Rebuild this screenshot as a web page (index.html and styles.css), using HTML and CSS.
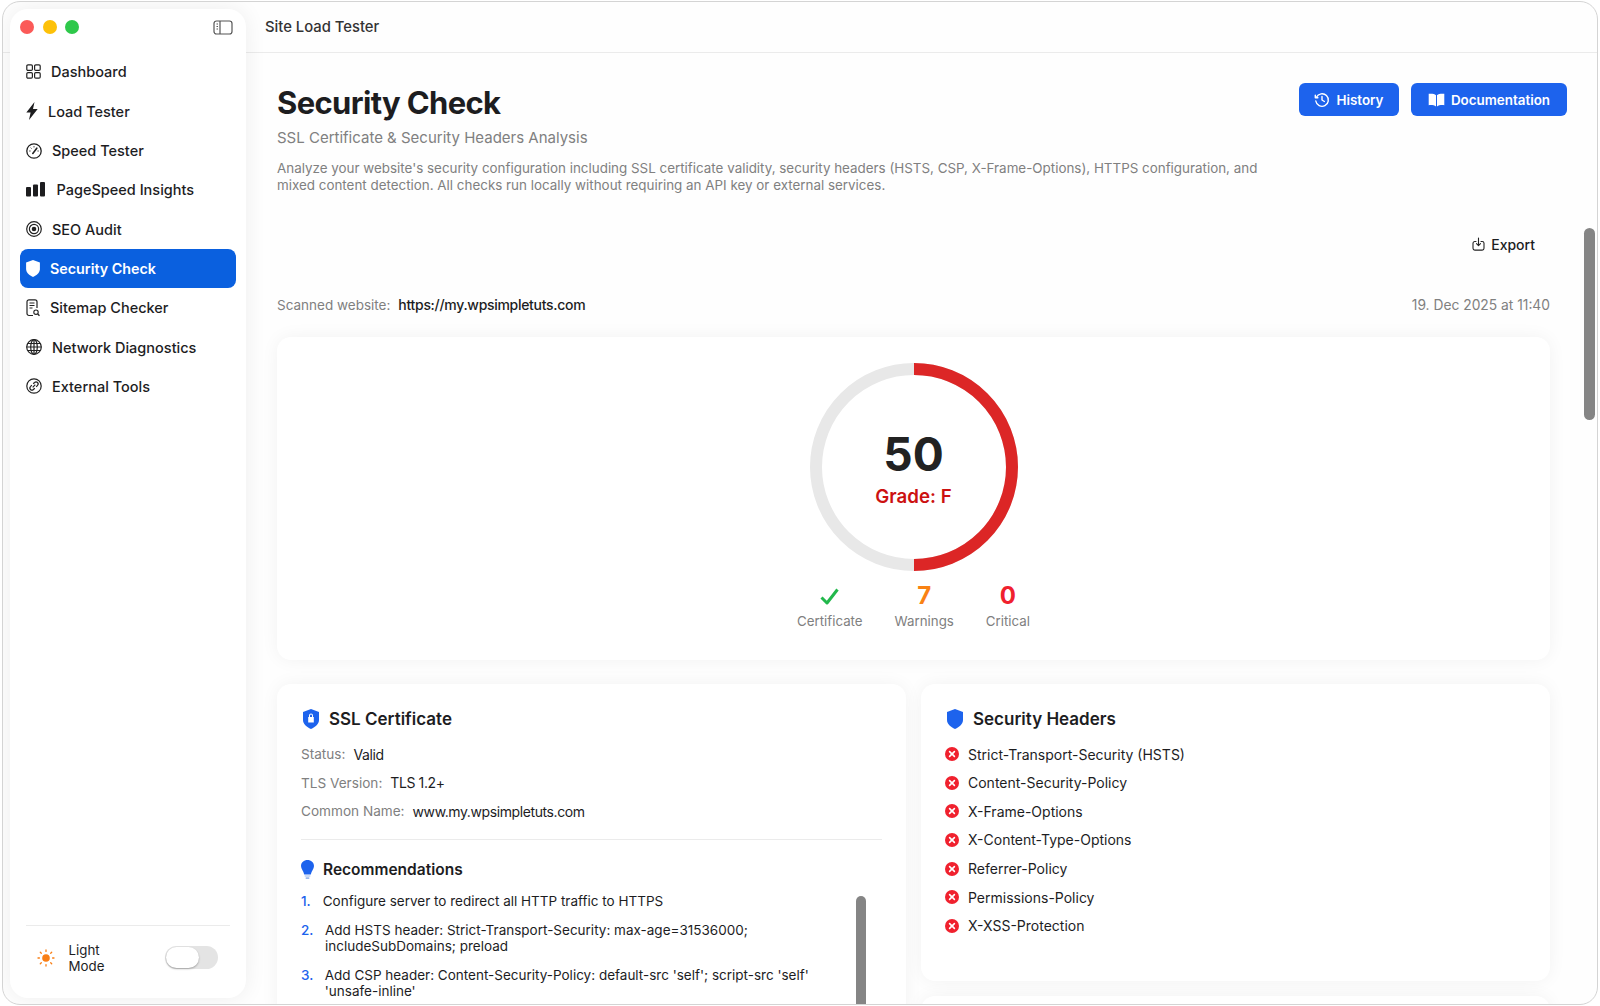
FILE: index.html
```html
<!DOCTYPE html>
<html lang="en">
<head>
<meta charset="utf-8">
<title>Site Load Tester</title>
<link rel="stylesheet" href="styles.css">
</head>
<body>
<div class="window">
  <aside class="sidebar">
    <div class="side-top">
      <div class="lights"><span class="light red"></span><span class="light yellow"></span><span class="light green"></span></div>
      <svg class="toggle-side" width="20" height="15" viewBox="0 0 20 15" fill="none" stroke="#555" stroke-width="1.2"><rect x="1" y="1" width="18" height="13" rx="2.5"/><path d="M7 1v13"/><path d="M3.5 4h1.5M3.5 6.5h1.5M3.5 9h1.5" stroke-width="1"/></svg>
    </div>
    <nav class="nav">
      <a class="nav-item"><svg width="15" height="15" viewBox="0 0 15 15" fill="none" stroke="#222" stroke-width="1.2"><rect x=".8" y=".8" width="5.6" height="5.6" rx="1.2"/><rect x="8.6" y=".8" width="5.6" height="5.6" rx="1.2"/><rect x=".8" y="8.6" width="5.6" height="5.6" rx="1.2"/><rect x="8.6" y="8.6" width="5.6" height="5.6" rx="1.2"/></svg>Dashboard</a>
      <a class="nav-item"><svg width="12" height="18" viewBox="0 0 12 18" fill="#1d1d1f"><path d="M8.500 0 .3 10.600h4.300L3 18l8.700-11H7z"/></svg>Load Tester</a>
      <a class="nav-item"><svg width="16" height="16" viewBox="0 0 16 16" fill="none" stroke="#222" stroke-width="1.300"><circle cx="8" cy="8" r="7.200"/><path d="M6.800 10.400 10.800 5.200" stroke-width="1.600" stroke-linecap="round"/><path d="M3.300 8h1.200M8 3.200v1.200M4.700 4.700l.8.800M11.500 8h1.200" stroke-width="1"/></svg>Speed Tester</a>
      <a class="nav-item"><svg class="bars" width="19" height="15" viewBox="0 0 19 15" fill="#1d1d1f"><rect x="0" y="5" width="5" height="9.500" rx="1"/><rect x="7" y="2.500" width="5" height="12" rx="1"/><rect x="14" y="0" width="5" height="14.500" rx="1"/></svg>PageSpeed Insights</a>
      <a class="nav-item"><svg width="16" height="16" viewBox="0 0 16 16" fill="none" stroke="#222" stroke-width="1.200"><circle cx="8" cy="8" r="7.300"/><circle cx="8" cy="8" r="4.600"/><circle cx="8" cy="8" r="2.300" fill="#222" stroke="none"/></svg>SEO Audit</a>
      <a class="nav-item active"><svg width="14" height="17" viewBox="0 0 13 16" fill="#fff"><path d="M6.500 0 13 2.300v6.200c0 3.500-3 6-6.500 7.500C3 14.500 0 12 0 8.500V2.300z"/></svg>Security Check</a>
      <a class="nav-item"><svg width="14" height="18" viewBox="0 0 14 18" fill="none" stroke="#222" stroke-width="1.200"><path d="M7 16.500H3a2 2 0 0 1-2-2V2.800a2 2 0 0 1 2-2h6a2 2 0 0 1 2 2V9"/><path d="M3.500 4h5M3.500 6.500h5M3.500 9h3"/><circle cx="10" cy="13.200" r="2.200" stroke-width="1.100"/><path d="m11.700 15 1.800 1.800" stroke-width="1.300"/></svg>Sitemap Checker</a>
      <a class="nav-item"><svg width="16" height="16" viewBox="0 0 16 16" fill="none" stroke="#222" stroke-width="1.200"><circle cx="8" cy="8" r="7.300"/><ellipse cx="8" cy="8" rx="3.300" ry="7.300"/><path d="M8 .700v14.600M.700 8h14.600M1.700 4.500h12.600M1.700 11.500h12.600"/></svg>Network Diagnostics</a>
      <a class="nav-item"><svg width="16" height="16" viewBox="0 0 16 16" fill="none" stroke="#222" stroke-width="1.200"><circle cx="8" cy="8" r="7.200"/><path d="m6.700 9.300 2.600-2.600"/><path d="M7.200 5.800 8.600 4.500a2 2 0 0 1 2.900 2.900l-1.300 1.400M8.800 10.200l-1.400 1.300a2 2 0 0 1-2.900-2.900l1.300-1.400"/></svg>External Tools</a>
    </nav>
    <div class="side-foot">
      <div class="theme">
        <svg class="sun" width="18" height="18" viewBox="0 0 18 18" fill="none" stroke="#f97f16" stroke-width="1.300" stroke-linecap="round"><circle cx="9" cy="9" r="3.800" fill="#f97f16" stroke="none"/><path d="M9 1v1.400M9 15.600V17M1 9h1.400M15.600 9H17M3.300 3.300l1 1M13.700 13.700l1 1M3.300 14.700l1-1M13.700 4.300l1-1"/></svg>
        <span class="theme-label">Light<br>Mode</span>
        <span class="switch"><span class="knob"></span></span>
      </div>
    </div>
  </aside>
  <main class="main">
    <header class="topbar">Site Load Tester</header>
    <div class="content">
      <section class="page-head">
        <div class="page-intro">
          <h1>Security Check</h1>
          <p class="subtitle">SSL Certificate &amp; Security Headers Analysis</p>
          <p class="desc">Analyze your website's security configuration including SSL certificate validity, security headers (HSTS, CSP, X-Frame-Options), HTTPS configuration, and mixed content detection. All checks run locally without requiring an API key or external services.</p>
        </div>
        <div class="actions">
          <a class="btn btn-history"><svg width="16" height="16" viewBox="0 0 16 16" fill="none" stroke="#fff" stroke-width="1.400" stroke-linecap="round" stroke-linejoin="round"><path d="M2.400 5.200A6.300 6.300 0 1 1 1.800 9"/><path d="M1.300 3.200v2.600h2.600"/><path d="M8 4.500V8l2.400 1.500"/></svg>History</a>
          <a class="btn btn-docs"><svg width="17" height="14" viewBox="0 0 17 14" fill="#fff"><path d="M8 2.200C6.500.900 4 .500.700.800v11.400c3-.3 5.500 0 7.300 1.300zM9 2.200c1.500-1.300 4-1.700 7.300-1.400v11.400c-3-.3-5.500 0-7.300 1.300z"/></svg>Documentation</a>
        </div>
      </section>
      <section class="results">
        <div class="export-row"><a class="export"><svg width="13" height="14" viewBox="0 0 13 14" fill="none" stroke="#222" stroke-width="1.100" stroke-linecap="round" stroke-linejoin="round"><path d="M4 4.500H2.800a1.800 1.800 0 0 0-1.800 1.800v5a1.800 1.800 0 0 0 1.800 1.800h7.400a1.800 1.800 0 0 0 1.800-1.800v-5a1.800 1.800 0 0 0-1.800-1.800H9"/><path d="M6.500 1v7.500M4.500 6.700l2 2 2-2"/></svg>Export</a></div>
        <div class="scan-row"><div><span class="muted small">Scanned website:</span><span class="url">https://my.wpsimpletuts.com</span></div><span class="muted date">19. Dec 2025 at 11:40</span></div>
        <div class="card score-card">
          <div class="ring">
            <svg width="208" height="208" viewBox="0 0 208 208" fill="none"><circle cx="104" cy="104" r="98" stroke="#e8e8e8" stroke-width="12"/><path d="M104 6a98 98 0 0 1 0 196" stroke="#dc2626" stroke-width="12"/></svg>
            <div class="ring-text"><div class="score">50</div><div class="grade">Grade: F</div></div>
          </div>
          <div class="stats">
            <div class="stat"><div class="stat-value"><svg width="19" height="17" viewBox="0 0 19 17" fill="none" stroke="#22b84c" stroke-width="3" stroke-linejoin="round"><path d="M1.500 9.500 7 15 17.500 1.500"/></svg></div><div class="stat-label">Certificate</div></div>
            <div class="stat"><div class="stat-value orange">7</div><div class="stat-label">Warnings</div></div>
            <div class="stat"><div class="stat-value redtext">0</div><div class="stat-label">Critical</div></div>
          </div>
        </div>
        <div class="card-grid">
          <div class="card info-card ssl-card">
            <h2><svg width="18" height="20" viewBox="0 0 18 20" fill="#1d63ed"><path fill-rule="evenodd" d="M9 0l8 3v8c0 4-3.500 7-8 9-4.500-2-8-5-8-9V3zM7 8V6.500a2 2 0 0 1 4 0V8h.8v5.500H6.200V8zm1 0h2V6.500a1 1 0 0 0-2 0z"/></svg>SSL Certificate</h2>
            <div class="kv"><span class="muted label">Status:</span><span class="val">Valid</span></div>
            <div class="kv"><span class="muted label">TLS Version:</span><span class="val">TLS 1.2+</span></div>
            <div class="kv"><span class="muted label">Common Name:</span><span class="val">www.my.wpsimpletuts.com</span></div>
            <hr class="rule">
            <h3><svg width="13" height="19" viewBox="0 0 13 19" fill="#1d63ed"><path d="M6.500 0C3 0 0 2.500 0 6c0 3 2.500 5 3.200 8.500h6.600C10.500 11 13 9 13 6c0-3.500-3-6-6.500-6z"/><path d="M3.700 15.500h5.600v1H3.700zM4.700 17.300h3.600V19H4.700z" fill="#9bb7ea"/></svg>Recommendations</h3>
            <ol class="recs">
              <li><span class="num">1.</span><span>Configure server to redirect all HTTP traffic to HTTPS</span></li>
              <li class="wide"><span class="num">2.</span><span>Add HSTS header: Strict-Transport-Security: max-age=31536000; includeSubDomains; preload</span></li>
              <li class="wide"><span class="num">3.</span><span>Add CSP header: Content-Security-Policy: default-src 'self'; script-src 'self' 'unsafe-inline'</span></li>
            </ol>
            <div class="inner-scroll"></div>
          </div>
          <div class="right-col">
            <div class="card info-card headers-card">
              <h2><svg width="18" height="20" viewBox="0 0 18 20" fill="#1d63ed"><path d="M9 0l8 3v8c0 4-3.500 7-8 9-4.500-2-8-5-8-9V3z"/></svg>Security Headers</h2>
              <ul class="headers">
                <li><svg class="x" width="14" height="14" viewBox="0 0 14 14"><circle cx="7" cy="7" r="7" fill="#f0212e"/><path d="m4.600 4.600 4.800 4.800M9.400 4.600 4.600 9.400" stroke="#fff" stroke-width="1.600" stroke-linecap="round"/></svg>Strict-Transport-Security (HSTS)</li>
                <li><svg class="x" width="14" height="14" viewBox="0 0 14 14"><circle cx="7" cy="7" r="7" fill="#f0212e"/><path d="m4.600 4.600 4.800 4.800M9.400 4.600 4.600 9.400" stroke="#fff" stroke-width="1.600" stroke-linecap="round"/></svg>Content-Security-Policy</li>
                <li><svg class="x" width="14" height="14" viewBox="0 0 14 14"><circle cx="7" cy="7" r="7" fill="#f0212e"/><path d="m4.600 4.600 4.800 4.800M9.400 4.600 4.600 9.400" stroke="#fff" stroke-width="1.600" stroke-linecap="round"/></svg>X-Frame-Options</li>
                <li><svg class="x" width="14" height="14" viewBox="0 0 14 14"><circle cx="7" cy="7" r="7" fill="#f0212e"/><path d="m4.600 4.600 4.800 4.800M9.400 4.600 4.600 9.400" stroke="#fff" stroke-width="1.600" stroke-linecap="round"/></svg>X-Content-Type-Options</li>
                <li><svg class="x" width="14" height="14" viewBox="0 0 14 14"><circle cx="7" cy="7" r="7" fill="#f0212e"/><path d="m4.600 4.600 4.800 4.800M9.400 4.600 4.600 9.400" stroke="#fff" stroke-width="1.600" stroke-linecap="round"/></svg>Referrer-Policy</li>
                <li><svg class="x" width="14" height="14" viewBox="0 0 14 14"><circle cx="7" cy="7" r="7" fill="#f0212e"/><path d="m4.600 4.600 4.800 4.800M9.400 4.600 4.600 9.400" stroke="#fff" stroke-width="1.600" stroke-linecap="round"/></svg>Permissions-Policy</li>
                <li><svg class="x" width="14" height="14" viewBox="0 0 14 14"><circle cx="7" cy="7" r="7" fill="#f0212e"/><path d="m4.600 4.600 4.800 4.800M9.400 4.600 4.600 9.400" stroke="#fff" stroke-width="1.600" stroke-linecap="round"/></svg>X-XSS-Protection</li>
              </ul>
            </div>
            <div class="card next-card"></div>
          </div>
        </div>
      </section>
    </div>
    <div class="scrollbar"></div>
  </main>
</div>
</body>
</html>
```
FILE: styles.css
```css
* { box-sizing: border-box; }
html, body { margin: 0; height: 1006px; overflow: hidden; background: #fff; }
body { font-family: Inter, "Liberation Sans", sans-serif; color: #1d1d1f; font-size: 14px; }
h1, h2, h3, p, ol, ul { margin: 0; padding: 0; }
ol, ul { list-style: none; }

.window { position: relative; display: flex; height: 1004px; margin: 1px 2px; border: 1px solid #d4d4d4; border-radius: 18px; background: #fefefe; overflow: hidden; }
.window::before { content: ""; position: absolute; left: 0; right: 0; top: 50px; height: 1px; background: #ebebeb; }

.sidebar { position: relative; flex: none; width: 236.5px; margin: 7px 0 6px 6.5px; display: flex; flex-direction: column; background: #fff; border-radius: 18px; box-shadow: 0 0 22px rgba(0,0,0,.07); padding: 0 10px; }
.side-top { display: flex; align-items: center; justify-content: space-between; height: 36px; padding: 0 3px 0 .5px; }
.lights { display: flex; gap: 8.5px; }
.light { width: 14px; height: 14px; border-radius: 50%; }
.red { background: #fb5a58; }
.yellow { background: #fdc109; }
.green { background: #2ec84a; }
.nav { display: flex; flex-direction: column; margin-top: 7.3px; }
.nav-item { display: flex; align-items: center; gap: 10px; height: 39.3px; padding-left: 6.5px; font-size: 14.5px; font-weight: 500; border-radius: 8px; color: #1d1d1f; }
.nav-item .bars { margin-right: 1.5px; }
.nav-item.active { background: #0a60df; color: #fff; font-weight: 600; font-size: 14.3px; }
.side-foot { margin-top: auto; border-top: 1px solid #ebebeb; margin-left: 6px; margin-right: 6px; height: 73px; }
.theme { display: flex; align-items: center; padding: 16px 12px 0 11px; gap: 14px; }
.theme-label { font-size: 13.3px; line-height: 16px; flex: 1; }
.switch { display: block; width: 53px; height: 23px; border-radius: 12px; background: #e4e4e4; padding: 1px; margin-top: -2px; }
.knob { display: block; width: 33px; height: 21px; border-radius: 11px; background: #fff; box-shadow: 0 1px 2px rgba(0,0,0,.3); }

.main { position: relative; flex: 1; min-width: 0; }
.topbar { height: 49px; padding: 0 0 0 19px; display: flex; align-items: center; font-size: 14.8px; font-weight: 500; color: #333; }
.content { padding: 32px 30px 0 31px; }
.page-head { display: flex; justify-content: space-between; align-items: flex-start; }
.page-intro { width: 990px; }
h1 { font-size: 31px; line-height: 40px; font-weight: 700; letter-spacing: -.65px; color: #1d1d1f; }
.subtitle { font-size: 15px; line-height: 20px; margin-top: 5px; color: #808080; }
.desc { font-size: 13.4px; line-height: 16.5px; margin-top: 12px; color: #808080; }
.actions { display: flex; gap: 12px; }
.btn { display: flex; align-items: center; gap: 6px; height: 33px; border-radius: 6px; background: #1d63ed; color: #fff; font-size: 13.4px; font-weight: 600; }
.btn-history { padding: 0 15.5px; }
.btn-docs { padding: 0 17px; }

.results { margin-right: 17px; }
.export-row { display: flex; justify-content: flex-end; padding: 39px 15px 0 0; }
.export { display: flex; align-items: center; gap: 6px; font-size: 14px; font-weight: 500; height: 24px; }
.scan-row { display: flex; justify-content: space-between; align-items: center; margin-top: 36px; height: 24px; }
.muted { color: #808080; }
.small { font-size: 13.5px; }
.date { font-size: 13.8px; padding-top: 1px; }
.url { margin-left: 8px; font-weight: 500; letter-spacing: -.3px; }
.card { background: #fff; border-radius: 14px; box-shadow: 0 0 18px rgba(0,0,0,.05); }
.score-card { margin-top: 21px; padding: 26px 0 29px; display: flex; flex-direction: column; align-items: center; }
.ring { position: relative; width: 208px; height: 208px; }
.ring svg { display: block; }
.ring-text { position: absolute; inset: 0; display: flex; flex-direction: column; align-items: center; justify-content: center; }
.score { font-size: 46px; line-height: 56px; font-weight: 700; color: #222; }
.grade { font-size: 18.7px; line-height: 24px; font-weight: 600; color: #cc1111; margin-top: 3px; }
.stats { display: flex; gap: 32px; margin-top: 11px; }
.stat { display: flex; flex-direction: column; align-items: center; }
.stat-value { font-size: 24px; line-height: 28px; height: 28px; font-weight: 700; display: flex; align-items: center; }
.orange { color: #f98213; }
.redtext { color: #f0212e; }
.stat-label { font-size: 13.3px; line-height: 20px; color: #808080; margin-top: 1px; }
.card-grid { display: grid; grid-template-columns: 1fr 1fr; gap: 15px; margin-top: 24px; align-items: start; }
.info-card { position: relative; padding: 21px 24px 0; }
h2 { display: flex; align-items: center; gap: 9px; font-size: 17px; line-height: 28px; font-weight: 600; }
h2 svg { margin-left: 1px; }
.kv { display: flex; gap: 8px; height: 28.5px; align-items: center; font-size: 14px; }
.label { font-size: 13.6px; }
.val { letter-spacing: -.4px; }
.info-card h2 { margin-bottom: 7px; }
.rule { border: 0; border-top: 1px solid #ebebeb; margin: 13px 0 0; }
h3 { display: flex; align-items: center; gap: 9px; font-size: 15.5px; line-height: 24px; font-weight: 600; margin-top: 18px; }
.recs { margin-top: 11.5px; width: 510px; }
.recs li { display: flex; gap: 12px; font-size: 13.5px; line-height: 16.5px; margin-bottom: 12px; }
.recs li.wide { gap: 11.5px; }
.num { color: #1d63ed; font-weight: 500; flex: none; }
.inner-scroll { position: absolute; right: 40px; top: 212px; width: 10px; height: 120px; border-radius: 5px; background: #858585; }
.ssl-card { height: 340px; }
.headers-card { height: 297px; }
.headers li { display: flex; align-items: center; gap: 9px; height: 28.57px; font-size: 14px; }
.headers .x { flex: none; }
.next-card { height: 60px; margin-top: 15px; }
.scrollbar { position: absolute; right: 2px; top: 226px; width: 11px; height: 192px; border-radius: 6px; background: #858585; }
```
